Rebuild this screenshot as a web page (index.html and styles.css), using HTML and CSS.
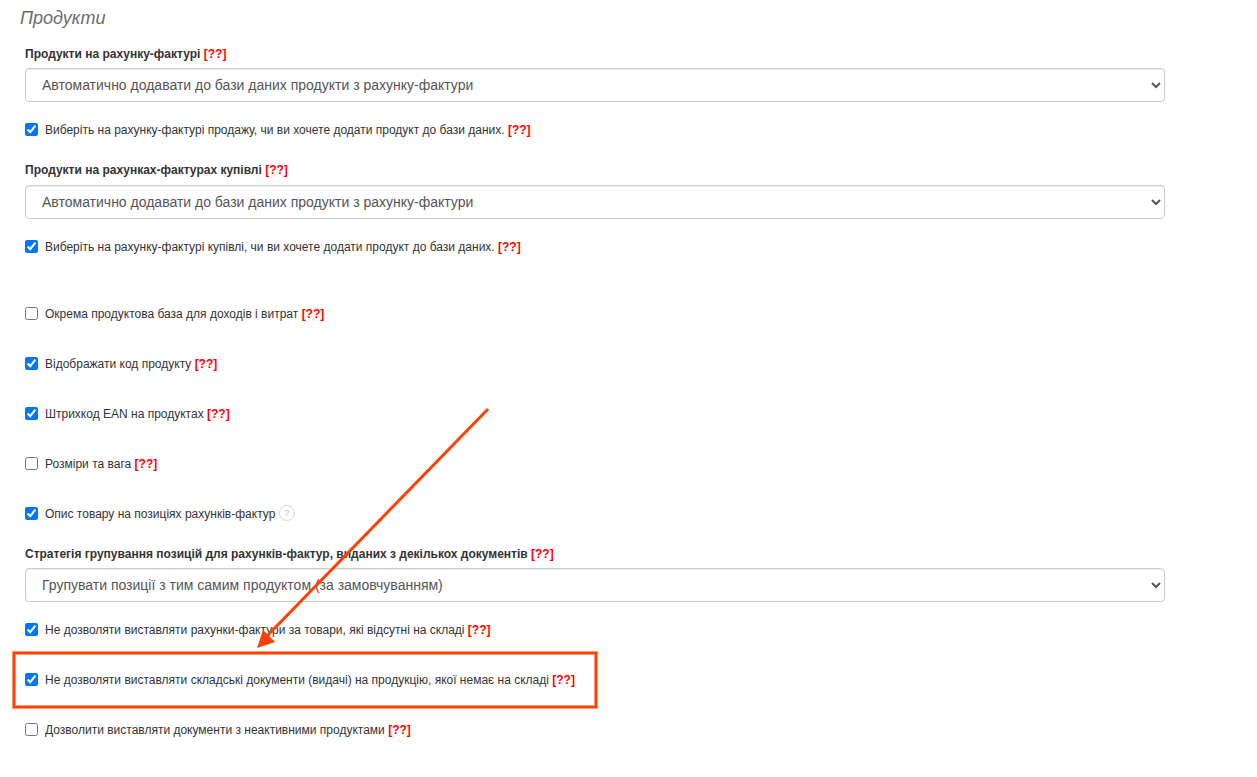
FILE: index.html
```html
<!DOCTYPE html>
<html lang="uk">
<head>
<meta charset="utf-8">
<meta name="viewport" content="width=device-width, initial-scale=1">
<title>Продукти</title>
<link rel="stylesheet" href="styles.css">
</head>
<body>
<main class="settings">
  <h2 class="title">Продукти</h2>
  <form class="form">
    <div class="group">
      <div class="label-row"><label for="sales">Продукти на рахунку-фактурі</label> <a class="hint" href="#">[??]</a></div>
      <select class="select" id="sales"><option>Автоматично додавати до бази даних продукти з рахунку-фактури</option></select>
    </div>
    <div class="check"><input type="checkbox" id="c1" checked><label for="c1">Виберіть на рахунку-фактурі продажу, чи ви хочете додати продукт до бази даних.</label> <a class="hint" href="#">[??]</a></div>
    <div class="group group-purchase">
      <div class="label-row"><label for="purchase">Продукти на рахунках-фактурах купівлі</label> <a class="hint" href="#">[??]</a></div>
      <select class="select" id="purchase"><option>Автоматично додавати до бази даних продукти з рахунку-фактури</option></select>
    </div>
    <div class="check"><input type="checkbox" id="c2" checked><label for="c2">Виберіть на рахунку-фактурі купівлі, чи ви хочете додати продукт до бази даних.</label> <a class="hint" href="#">[??]</a></div>
    <div class="check section-start"><input type="checkbox" id="c3"><label for="c3">Окрема продуктова база для доходів і витрат</label> <a class="hint" href="#">[??]</a></div>
    <div class="check"><input type="checkbox" id="c4" checked><label for="c4">Відображати код продукту</label> <a class="hint" href="#">[??]</a></div>
    <div class="check"><input type="checkbox" id="c5" checked><label for="c5">Штрихкод EAN на продуктах</label> <a class="hint" href="#">[??]</a></div>
    <div class="check"><input type="checkbox" id="c6"><label for="c6">Розміри та вага</label> <a class="hint" href="#">[??]</a></div>
    <div class="check"><input type="checkbox" id="c7" checked><label for="c7">Опис товару на позиціях рахунків-фактур</label> <button class="help" type="button">?</button></div>
    <div class="group">
      <div class="label-row"><label for="strategy">Стратегія групування позицій для рахунків-фактур, виданих з декількох документів</label> <a class="hint" href="#">[??]</a></div>
      <select class="select" id="strategy"><option>Групувати позиції з тим самим продуктом (за замовчуванням)</option></select>
    </div>
    <div class="check"><input type="checkbox" id="c8" checked><label for="c8">Не дозволяти виставляти рахунки-фактури за товари, які відсутні на складі</label> <a class="hint" href="#">[??]</a></div>
    <div class="check highlighted"><input type="checkbox" id="c9" checked><label for="c9">Не дозволяти виставляти складські документи (видачі) на продукцію, якої немає на складі</label> <a class="hint" href="#">[??]</a>
      <svg class="arrow" width="240" height="250" viewBox="0 0 240 250" aria-hidden="true">
        <path d="M235 7 L14 234" fill="none" stroke="#ff4005" stroke-width="3"/>
        <path d="M4 246 L10 228 L22 240 Z" fill="#ff4005"/>
      </svg>
    </div>
    <div class="check"><input type="checkbox" id="c10"><label for="c10">Дозволити виставляти документи з неактивними продуктами</label> <a class="hint" href="#">[??]</a></div>
  </form>
</main>
</body>
</html>
```

FILE: styles.css
```css
* { box-sizing: border-box; }

body {
  margin: 0;
  background: #fff;
  color: #333;
  font: 12px/20px "Liberation Sans", Arial, sans-serif;
}

.settings { padding: 8px 92px 20px 20px; }

.title {
  margin: 0 0 16px;
  color: #6b6b73;
  font-size: 18px;
  font-style: italic;
  font-weight: 400;
  line-height: 20px;
}

.form {
  display: flex;
  flex-direction: column;
  align-items: flex-start;
  padding-left: 5px;
}

.group { width: 100%; margin-bottom: 18px; }
.check + .group { margin-top: 20px; }

.label-row { margin-bottom: 4px; font-weight: 700; }
.group-purchase .label-row { margin-bottom: 5px; }

.select {
  display: block;
  width: 100%;
  height: 34px;
  padding: 6px 0 6px 12px;
  border: 1px solid #ccc;
  border-radius: 4px;
  background: #fff;
  box-shadow: inset 0 1px 1px rgba(0, 0, 0, 0.075);
  color: #555;
  font: 14px/20px "Liberation Sans", Arial, sans-serif;
}

.check { position: relative; min-height: 20px; }
.check + .check { margin-top: 30px; }
.check + .section-start { margin-top: 47px; }

.check input {
  width: 13px;
  height: 13px;
  margin: 0 7px 0 0;
  vertical-align: -2px;
}

.hint { color: #f00; font-weight: 700; text-decoration: none; }

.help {
  width: 16px;
  height: 16px;
  padding: 0;
  border: 1px solid #d8d8d8;
  border-radius: 50%;
  background: #fff;
  color: #bbb;
  font: 9px/14px "Liberation Sans", Arial, sans-serif;
  vertical-align: middle;
  vertical-align: text-bottom;
}

.highlighted::before {
  content: "";
  position: absolute;
  inset: -18px -22px -18px -12px;
  border: 2px solid #ff4005;
  box-shadow: 0 0 0 1px rgba(255, 64, 5, 0.55), inset 0 0 0 1px rgba(255, 64, 5, 0.55);
  pointer-events: none;
}

.arrow {
  position: absolute;
  left: 228px;
  bottom: 38px;
  pointer-events: none;
}
```
